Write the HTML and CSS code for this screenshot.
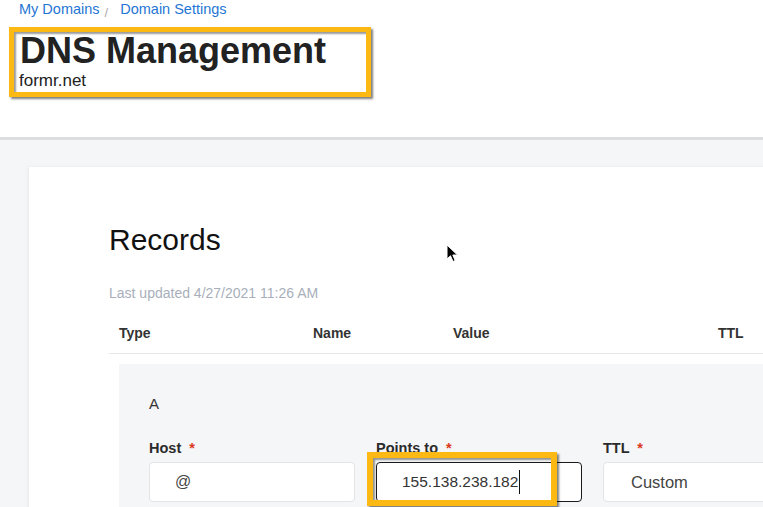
FILE: index.html
```html
<!DOCTYPE html>
<html lang="en">
<head>
<meta charset="utf-8">
<title>DNS Management</title>
<link rel="stylesheet" href="styles.css">
</head>
<body>
<header class="top">
  <nav class="crumbs"><a class="crumb" href="#">My Domains</a><span class="sep">/</span><a class="crumb" href="#">Domain Settings</a></nav>
  <h1 class="title">DNS Management</h1>
  <div class="domain">formr.net</div>
</header>
<main class="content">
  <section class="card">
    <h2 class="card-title">Records</h2>
    <p class="updated">Last updated 4/27/2021 11:26 AM</p>
    <div class="thead">
      <span>Type</span><span>Name</span><span>Value</span><span>TTL</span>
    </div>
    <div class="editor">
      <div class="rtype">A</div>
      <div class="fields">
        <div class="field">
          <div class="label">Host <span class="req">*</span></div>
          <div class="input">@</div>
        </div>
        <div class="field">
          <div class="label">Points to <span class="req">*</span></div>
          <div class="input input-focus">155.138.238.182<span class="caret"></span></div>
        </div>
        <div class="field">
          <div class="label">TTL <span class="req">*</span></div>
          <div class="input input-ttl">Custom</div>
        </div>
      </div>
    </div>
  </section>
</main>
<div class="mark mark-title"></div>
<div class="mark mark-value"></div>
<svg class="pointer" width="14" height="19" viewBox="0 0 14 19" aria-hidden="true">
  <path d="M1 1 L1 15 L4.5 11.8 L7 17.5 L9.2 16.5 L6.8 11 L11.5 11 Z" fill="#000" stroke="#fff" stroke-width="1" stroke-linejoin="round"/>
</svg>
</body>
</html>
```

FILE: styles.css
```css
html, body {
  margin: 0;
  padding: 0;
  overflow: hidden;
  background: #fff;
  font-family: "Liberation Sans", Arial, sans-serif;
  color: #1d1d1d;
}
body {
  width: 763px;
  height: 507px;
  position: relative;
}
.top {
  height: 137px;
  padding-left: 19px;
  box-sizing: border-box;
}
.crumbs {
  display: flex;
  align-items: baseline;
  font-size: 14.5px;
  line-height: 18px;
}
.crumb {
  color: #1f76d3;
  text-decoration: none;
}
.sep {
  color: #aaa;
  font-size: 13px;
  margin: 0 12px 0 5px;
  position: relative;
  top: 3px;
}
.title {
  margin: 12px 0 0 1px;
  font-size: 36px;
  line-height: 40px;
  font-weight: 700;
  color: #222;
}
.domain {
  font-size: 17px;
  line-height: 20px;
  color: #222;
}
.content {
  border-top: 3px solid #dcdddf;
  background: #f5f6f7;
  padding: 27px 0 0 29px;
  height: 370px;
  box-sizing: border-box;
  overflow: hidden;
}
.card {
  background: #fff;
  box-shadow: -1px 0 4px rgba(0, 0, 0, 0.06);
  margin-right: -40px;
  height: 420px;
  padding: 55px 0 0 80px;
  box-sizing: border-box;
}
.card-title {
  margin: 0;
  font-size: 30px;
  line-height: 36px;
  font-weight: 400;
  color: #111;
}
.updated {
  margin: 26px 0 0 0;
  font-size: 14px;
  line-height: 18px;
  color: #a8afba;
}
.thead {
  margin-top: 22px;
  display: grid;
  grid-template-columns: 194px 140px 265px auto;
  padding: 0 0 11px 10px;
  border-bottom: 1px solid #e6e7e8;
  font-size: 14px;
  line-height: 18px;
  font-weight: 700;
  color: #333;
}
.editor {
  margin: 10px 0 0 10px;
  background: #f5f6f7;
  padding: 30px 0 40px 30px;
}
.rtype {
  font-size: 15px;
  line-height: 20px;
  color: #333;
}
.fields {
  margin-top: 25px;
  display: grid;
  grid-template-columns: 206px 206px 206px;
  column-gap: 21px;
}
.label {
  font-size: 14.5px;
  line-height: 18px;
  font-weight: 700;
  color: #2b2b2b;
}
.req {
  color: #db3a1c;
  margin-left: 4px;
}
.input {
  margin-top: 5px;
  height: 40px;
  box-sizing: border-box;
  border: 1px solid #e3e4e6;
  border-radius: 4px;
  background: #fff;
  padding-left: 25px;
  display: flex;
  align-items: center;
  font-size: 16px;
  color: #444;
}
.input-focus {
  border-color: #1a1a1a;
  color: #333;
  font-size: 15.5px;
}
.input-ttl {
  padding-left: 27px;
  font-size: 16.5px;
}
.caret {
  display: inline-block;
  width: 1px;
  height: 24px;
  background: #111;
  margin-left: 1px;
}
.mark {
  position: absolute;
  box-sizing: border-box;
  border: 5px solid #fcb813;
  box-shadow: 2px 2px 2px rgba(0, 0, 0, 0.5), inset 2px 2px 2px rgba(0, 0, 0, 0.4);
}
.mark-title {
  left: 9px;
  top: 27px;
  width: 362px;
  height: 70px;
}
.mark-value {
  left: 367px;
  top: 452px;
  width: 190px;
  height: 54px;
  border-width: 6px;
}
.pointer {
  position: absolute;
  left: 446px;
  top: 244px;
}
```
